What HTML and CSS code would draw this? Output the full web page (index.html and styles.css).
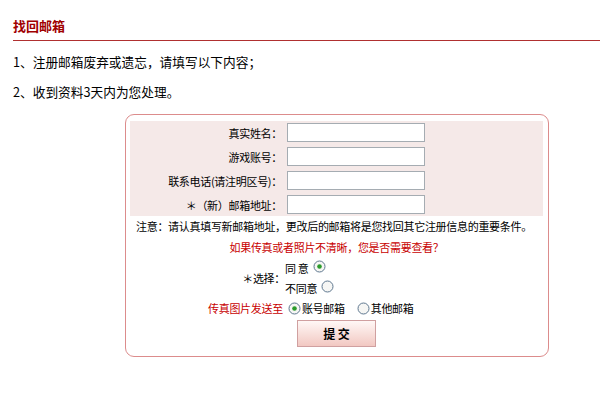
FILE: index.html
```html
<!DOCTYPE html>
<html lang="zh-CN">
<head>
<meta charset="utf-8">
<title>找回邮箱</title>
<link rel="stylesheet" href="styles.css">
</head>
<body>
<div class="header"><h1 class="title">找回邮箱</h1></div>
<p class="intro first">1、注册邮箱废弃或遗忘，请填写以下内容；</p>
<p class="intro second">2、收到资料3天内为您处理。</p>

<form class="box">
  <div class="fields">
    <label class="lbl">真实姓名：</label><span class="inp"></span>
    <label class="lbl">游戏账号：</label><span class="inp"></span>
    <label class="lbl">联系电话(请注明区号)：</label><span class="inp"></span>
    <label class="lbl">＊（新）邮箱地址：</label><span class="inp"></span>
  </div>
  <p class="notice">注意：请认真填写新邮箱地址，更改后的邮箱将是您找回其它注册信息的重要条件。</p>
  <p class="question">如果传真或者照片不清晰，您是否需要查看？</p>
  <div class="choice">
    <span class="choice-lbl">＊选择：</span>
    <div class="options">
      <div class="opt">同&nbsp;意 <svg class="radio" viewBox="0 0 13 13" width="13" height="13"><circle cx="6.5" cy="6.5" r="5.5" fill="#f6f6f4" stroke="#5f7890" stroke-width="1"/><circle cx="6.5" cy="6.5" r="2.3" fill="#2b9b2b"/></svg></div>
      <div class="opt">不同意 <svg class="radio" viewBox="0 0 13 13" width="13" height="13"><circle cx="6.5" cy="6.5" r="5.5" fill="#f6f6f4" stroke="#5f7890" stroke-width="1"/></svg></div>
    </div>
  </div>
  <div class="send">
    <span class="send-lbl">传真图片发送至</span>
    <svg class="radio" viewBox="0 0 13 13" width="13" height="13"><circle cx="6.5" cy="6.5" r="5.5" fill="#f6f6f4" stroke="#5f7890" stroke-width="1"/><circle cx="6.5" cy="6.5" r="2.3" fill="#2b9b2b"/></svg>
    <span class="send-opt">账号邮箱</span>
    <svg class="radio r2" viewBox="0 0 13 13" width="13" height="13"><circle cx="6.5" cy="6.5" r="5.5" fill="#f6f6f4" stroke="#5f7890" stroke-width="1"/></svg>
    <span class="send-opt">其他邮箱</span>
  </div>
  <div class="actions"><span class="btn">提 交</span></div>
</form>
</body>
</html>
```

FILE: styles.css
```css
* { box-sizing: border-box; }
body {
  margin: 0;
  background: #fff;
  color: #000;
  font-family: "SimSun", "Noto Sans CJK SC", sans-serif;
  font-size: 12px;
  line-height: 16px;
}
.header {
  margin-left: 13px;
  height: 41px;
  padding-top: 18px;
  border-bottom: 1px solid #b03030;
}
.title {
  margin: 0;
  font-size: 13px;
  line-height: 16px;
  font-weight: bold;
  color: #a00000;
}
.intro { margin: 0 0 0 13px; font-size: 12.7px; }
.intro.first { margin-top: 13px; }
.intro.second { margin-top: 14px; }

.box {
  margin: 14px 0 0 125px;
  width: 424px;
  height: 243px;
  border: 1px solid #dc8c8c;
  border-radius: 9px;
  padding: 6px 5px 0 4px;
  font-size: 11px;
  letter-spacing: -0.3px;
}
.fields {
  background: #f5e9e8;
  padding: 2px 0 2px 0;
  display: grid;
  grid-template-columns: 152px 138px;
  column-gap: 5px;
  row-gap: 5px;
  align-items: center;
}
.lbl { text-align: right; }
.inp {
  display: block;
  height: 19px;
  background: #fff;
  border: 1px solid #a5acb2;
}
.notice {
  margin: 2px 0 0 6px;
  white-space: nowrap;
}
.question {
  margin: 5px 0 0 0;
  text-align: center;
  color: #c80000;
}
.choice {
  margin-top: 3px;
  display: flex;
  align-items: center;
}
.choice-lbl {
  width: 155px;
  text-align: right;
}
.options { display: flex; flex-direction: column; }
.opt {
  height: 20px;
  display: flex;
  align-items: center;
  gap: 4px;
}
.opt .radio { margin-top: -3px; }
.send {
  margin-top: 2px;
  padding-left: 78px;
  display: flex;
  align-items: center;
  height: 16px;
}
.send-lbl { color: #c80000; margin-right: 5px; }
.send .radio { margin-right: 1px; }
.send .r2 { margin-left: 12px; }
.actions {
  margin-top: 4px;
  display: flex;
  justify-content: center;
}
.btn {
  display: flex;
  align-items: center;
  justify-content: center;
  width: 79px;
  height: 27px;
  border: 1px solid #d0a0a0;
  background: linear-gradient(#fff8f6, #f2c8c2);
  font-size: 12px;
  font-weight: bold;
  letter-spacing: 0;
}
```
